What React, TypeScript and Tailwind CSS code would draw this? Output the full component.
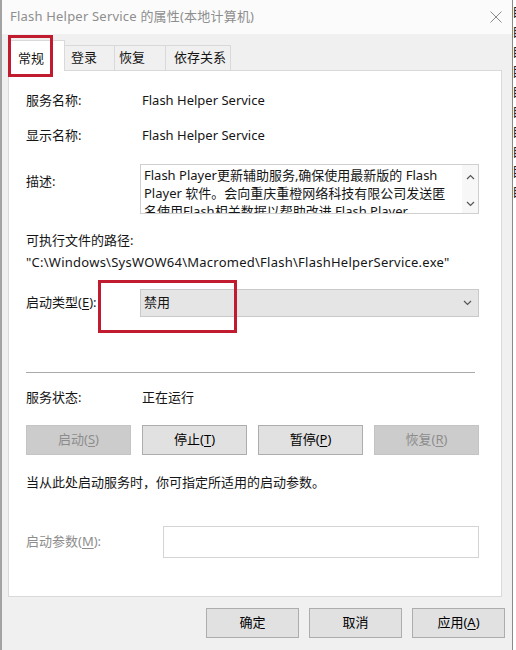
import React from 'react';

const font = "font-['Noto_Sans','Noto_Sans_CJK_SC',sans-serif]";

function Key({ k }: { k: string }) {
  return <span className="underline underline-offset-2 decoration-1">{k}</span>;
}

function Btn({ label, k, disabled, className = '' }: { label: string; k?: string; disabled?: boolean; className?: string }) {
  return (
    <div
      className={`h-[30px] flex items-center justify-center text-[13px] border ${
        disabled ? 'bg-[#cccccc] border-[#c4c4c4] text-[#8c8c8c]' : 'bg-[#e1e1e1] border-[#adadad] text-black'
      } ${className}`}
    >
      {label}
      {k && (
        <>
          (<Key k={k} />)
        </>
      )}
    </div>
  );
}

function Chevron({ up }: { up?: boolean }) {
  return (
    <svg width="9" height="6" viewBox="0 0 9 6" className="shrink-0">
      <polyline
        points={up ? '1,5 4.5,1.5 8,5' : '1,1 4.5,4.5 8,1'}
        fill="none"
        stroke="#555"
        strokeWidth="1.2"
      />
    </svg>
  );
}

function Row({ label, children }: { label: React.ReactNode; children?: React.ReactNode }) {
  return (
    <div className="flex items-center h-[22px]">
      <div className="w-[116px] shrink-0">{label}</div>
      <div>{children}</div>
    </div>
  );
}

export default function App() {
  // widths read off the screenshot
  const tabs = [
    { name: '登录', w: 'w-[50px] pl-[6px]' },
    { name: '恢复', w: 'w-[51px] pl-[4px]' },
    { name: '依存关系', w: 'w-[65px] pl-[8px]' },
  ];

  return (
    <div className={`relative w-[516px] h-[650px] bg-[#f0f0f0] flex overflow-hidden text-[#151515] ${font}`}>
      {/* dialog */}
      <div className="w-[512px] h-full flex flex-col border-l-2 border-[#a3a3a3]">
        {/* title bar */}
        <div className="h-[34px] bg-[#fbfbfb] flex items-center justify-between pl-[8px] pr-[10px]">
          <span className="text-[13px] text-[#8e8e8e] tracking-[0.2px]">Flash Helper Service 的属性(本地计算机)</span>
          <svg width="12" height="12" viewBox="0 0 12 12">
            <path d="M0.5 0.5 L11.5 11.5 M11.5 0.5 L0.5 11.5" stroke="#8a8a8a" strokeWidth="1" />
          </svg>
        </div>

        {/* tabs */}
        <div className="mt-[6px] ml-[6px] flex items-end h-[30px] relative z-10">
          <div className="h-[31px] w-[57px] bg-white border border-b-0 border-[#d9d9d9] pl-[9px] pt-[8px] text-[13px] -mb-[1px]">
            常规
          </div>
          {tabs.map((t) => (
            <div
              key={t.name}
              className={`h-[25px] ${t.w} flex items-center bg-[#f0f0f0] border border-b-0 border-l-0 border-[#d9d9d9] text-[13px]`}
            >
              {t.name}
            </div>
          ))}
        </div>

        {/* panel */}
        <div className="ml-[6px] w-[494px] h-[527px] bg-white border border-[#d9d9d9] pl-[17px] pr-[22px] pt-[19px] text-[13px] flex flex-col">
          <Row label="服务名称:">Flash Helper Service</Row>
          <div className="mt-[13px]">
            <Row label="显示名称:">Flash Helper Service</Row>
          </div>

          <div className="mt-[17px] flex items-start">
            <div className="w-[114px] shrink-0 mt-[6px] leading-[22px]">描述:</div>
            <div className="w-[339px] h-[50px] border border-[#cfcfcf] flex overflow-hidden">
              <div className="flex-1 pl-[3px] pt-[1px] leading-[18px] overflow-hidden whitespace-nowrap">
                <div>Flash Player更新辅助服务,确保使用最新版的 Flash</div>
                <div>Player 软件。会向重庆重橙网络科技有限公司发送匿</div>
                <div>名使用Flash相关数据以帮助改进 Flash Player</div>
              </div>
              <div className="w-[16px] bg-[#f7f7f7] flex flex-col items-center justify-between pt-[9px] pb-[6px]">
                <Chevron up />
                <Chevron />
              </div>
            </div>
          </div>

          <div className="mt-[16px] h-[22px] flex items-center">可执行文件的路径:</div>
          <div className="h-[22px] flex items-center tracking-[0.25px]">
            "C:\Windows\SysWOW64\Macromed\Flash\FlashHelperService.exe"
          </div>

          <div className="mt-[15px] flex items-center">
            <div className="w-[114px] shrink-0">
              启动类型(<Key k="E" />):
            </div>
            <div className="w-[339px] h-[28px] bg-[#e5e5e5] border border-[#c9c9c9] flex items-center justify-between pl-[3px] pr-[6px]">
              <span>禁用</span>
              <Chevron />
            </div>
          </div>

          <div className="mt-[55px] w-[449px] border-t border-[#a9a9a9]" />

          <div className="mt-[14px]">
            <Row label="服务状态:">正在运行</Row>
          </div>

          <div className="mt-[16px] grid grid-cols-4 gap-x-[11px] w-[453px]">
            <Btn label="启动" k="S" disabled />
            <Btn label="停止" k="T" />
            <Btn label="暂停" k="P" />
            <Btn label="恢复" k="R" disabled />
          </div>

          <div className="mt-[17px] h-[22px] flex items-center">当从此处启动服务时，你可指定所适用的启动参数。</div>

          <div className="mt-[32px] flex items-center">
            <div className="w-[137px] shrink-0 text-[#8d8d8d]">
              启动参数(<Key k="M" />):
            </div>
            <div className="w-[317px] h-[32px] border border-[#d4d4d4] bg-white" />
          </div>
        </div>

        {/* bottom buttons */}
        <div className="mt-[11px] flex justify-end gap-[10px] pr-[7px]">
          <Btn label="确定" className="w-[93px]" />
          <Btn label="取消" className="w-[93px]" />
          <Btn label="应用" k="A" className="w-[93px]" />
        </div>
      </div>

      {/* edge of the window behind */}
      <div className="w-[4px] h-full border-l border-[#8a8a8a] bg-white overflow-hidden">
        <div className="w-[20px] text-[13px] leading-[20px] text-[#222] pt-[1px]">
          {['自', '自', '自', '目', '自', '自', '自', '自', '目', '自'].map((c, i) => (
            <div key={i} className="-ml-[1px]">{c}</div>
          ))}
        </div>
      </div>

      {/* red annotation boxes */}
      <div className="absolute left-[8px] top-[35px] w-[45px] h-[42px] border-[3px] border-[#c01b2e] z-20" />
      <div className="absolute left-[98px] top-[280px] w-[139px] h-[53px] border-[3px] border-[#c01b2e] z-20" />
    </div>
  );
}
